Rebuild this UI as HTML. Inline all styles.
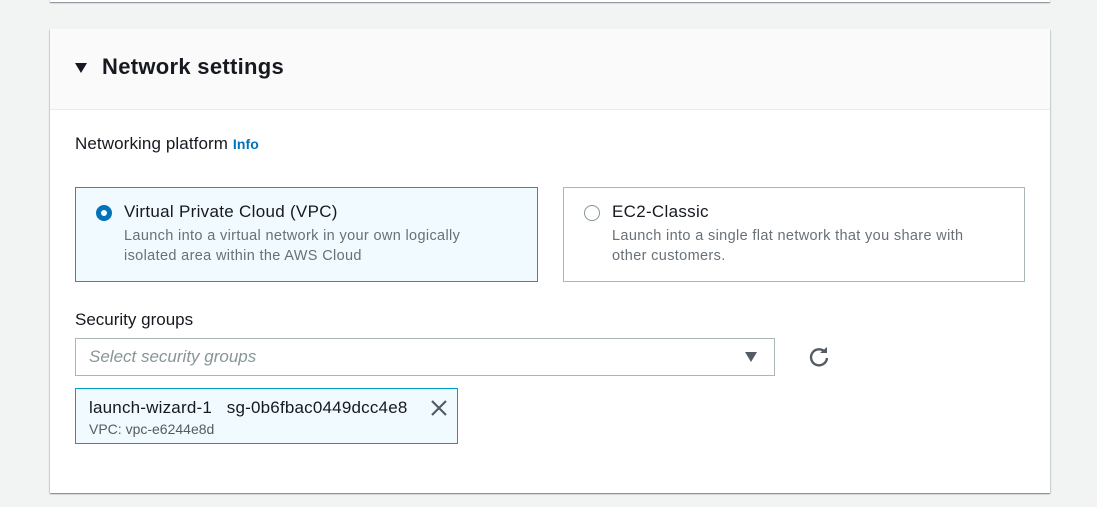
<!DOCTYPE html><html><head><style>
body{margin:0;width:1097px;height:507px;background:#f2f3f3;font-family:"Liberation Sans",sans-serif;position:relative;overflow:hidden;color:#16191f}
.a{position:absolute}
.top{left:50px;top:-10px;width:1000px;height:12px;background:#fff;box-shadow:0 1px 1px 0 rgba(0,28,36,.5)}
.card{left:50px;top:29px;width:1000px;height:464px;background:#fff;box-shadow:0 1px 1px 0 rgba(0,28,36,.4),1px 1px 1px 0 rgba(0,28,36,.1),-1px 1px 1px 0 rgba(0,28,36,.1)}
.hd{left:0;top:0;width:1000px;height:80px;background:#fafafa;border-bottom:1px solid #eaeded}
.opt{width:463px;height:95px;border:1px solid #aab7b8;box-sizing:border-box}
.opt .t{position:absolute;left:48px;top:14px;font-size:17px;letter-spacing:.3px}
.opt .d{position:absolute;left:48px;top:38px;font-size:14.5px;color:#687078;line-height:20px;letter-spacing:.35px}
.radio{position:absolute;left:20px;top:17px;width:16px;height:16px;border-radius:50%;box-sizing:border-box}
</style></head><body>
<div class="a top"></div>
<div class="a card">
 <div class="a hd">
  <svg class="a" style="left:24px;top:33px" width="14" height="12"><path d="M1 1h12L7 11z" fill="#16191f"/></svg>
  <div class="a" style="left:52px;top:25px;font-size:22px;font-weight:bold;letter-spacing:.3px">Network settings</div>
 </div>
 <div class="a" style="left:25px;top:105px;font-size:17px;letter-spacing:.1px">Networking platform <span style="color:#0073bb;font-weight:bold;font-size:14px">Info</span></div>
 <div class="a opt" style="left:25px;top:158px;background:#f1faff;border-color:#00a1c9">
  <div class="radio" style="border:5px solid #0073bb;background:#fff"></div>
  <div class="t">Virtual Private Cloud (VPC)</div>
  <div class="d">Launch into a virtual network in your own logically<br>isolated area within the AWS Cloud</div>
 </div>
 <div class="a opt" style="left:513px;top:158px;width:462px">
  <div class="radio" style="border:1px solid #879596;background:#fff"></div>
  <div class="t">EC2-Classic</div>
  <div class="d">Launch into a single flat network that you share with<br>other customers.</div>
 </div>
 <div class="a" style="left:25px;top:281px;font-size:17px">Security groups</div>
 <div class="a" style="left:25px;top:309px;width:700px;height:38px;border:1px solid #aab7b8;box-sizing:border-box">
  <div class="a" style="left:13px;top:8px;font-size:17px;font-style:italic;color:#879596">Select security groups</div>
  <svg class="a" style="left:668px;top:12px" width="14" height="12"><path d="M1 1h12L7 11z" fill="#545b64"/></svg>
 </div>
 <svg class="a" style="left:757px;top:316px" width="24" height="24" viewBox="0 0 24 24"><path d="M18 7A8 8 0 1 0 20 13" fill="none" stroke="#545b64" stroke-width="2.4"/><path d="M13 6h7V0z" fill="#545b64" transform="translate(0 2)"/></svg>
 <div class="a" style="left:25px;top:359px;width:383px;height:56px;border:1px solid #00a1c9;background:#f1faff;box-sizing:border-box">
  <div class="a" style="left:13px;top:9px;font-size:17px;letter-spacing:.2px">launch-wizard-1&nbsp;&nbsp; sg-0b6fbac0449dcc4e8</div>
  <div class="a" style="left:13px;top:32px;font-size:14px;color:#545b64">VPC: vpc-e6244e8d</div>
  <svg class="a" style="left:354px;top:10px" width="18" height="18"><path d="M2 2L16 16M16 2L2 16" stroke="#545b64" stroke-width="2.2"/></svg>
 </div>
</div>
</body></html>
